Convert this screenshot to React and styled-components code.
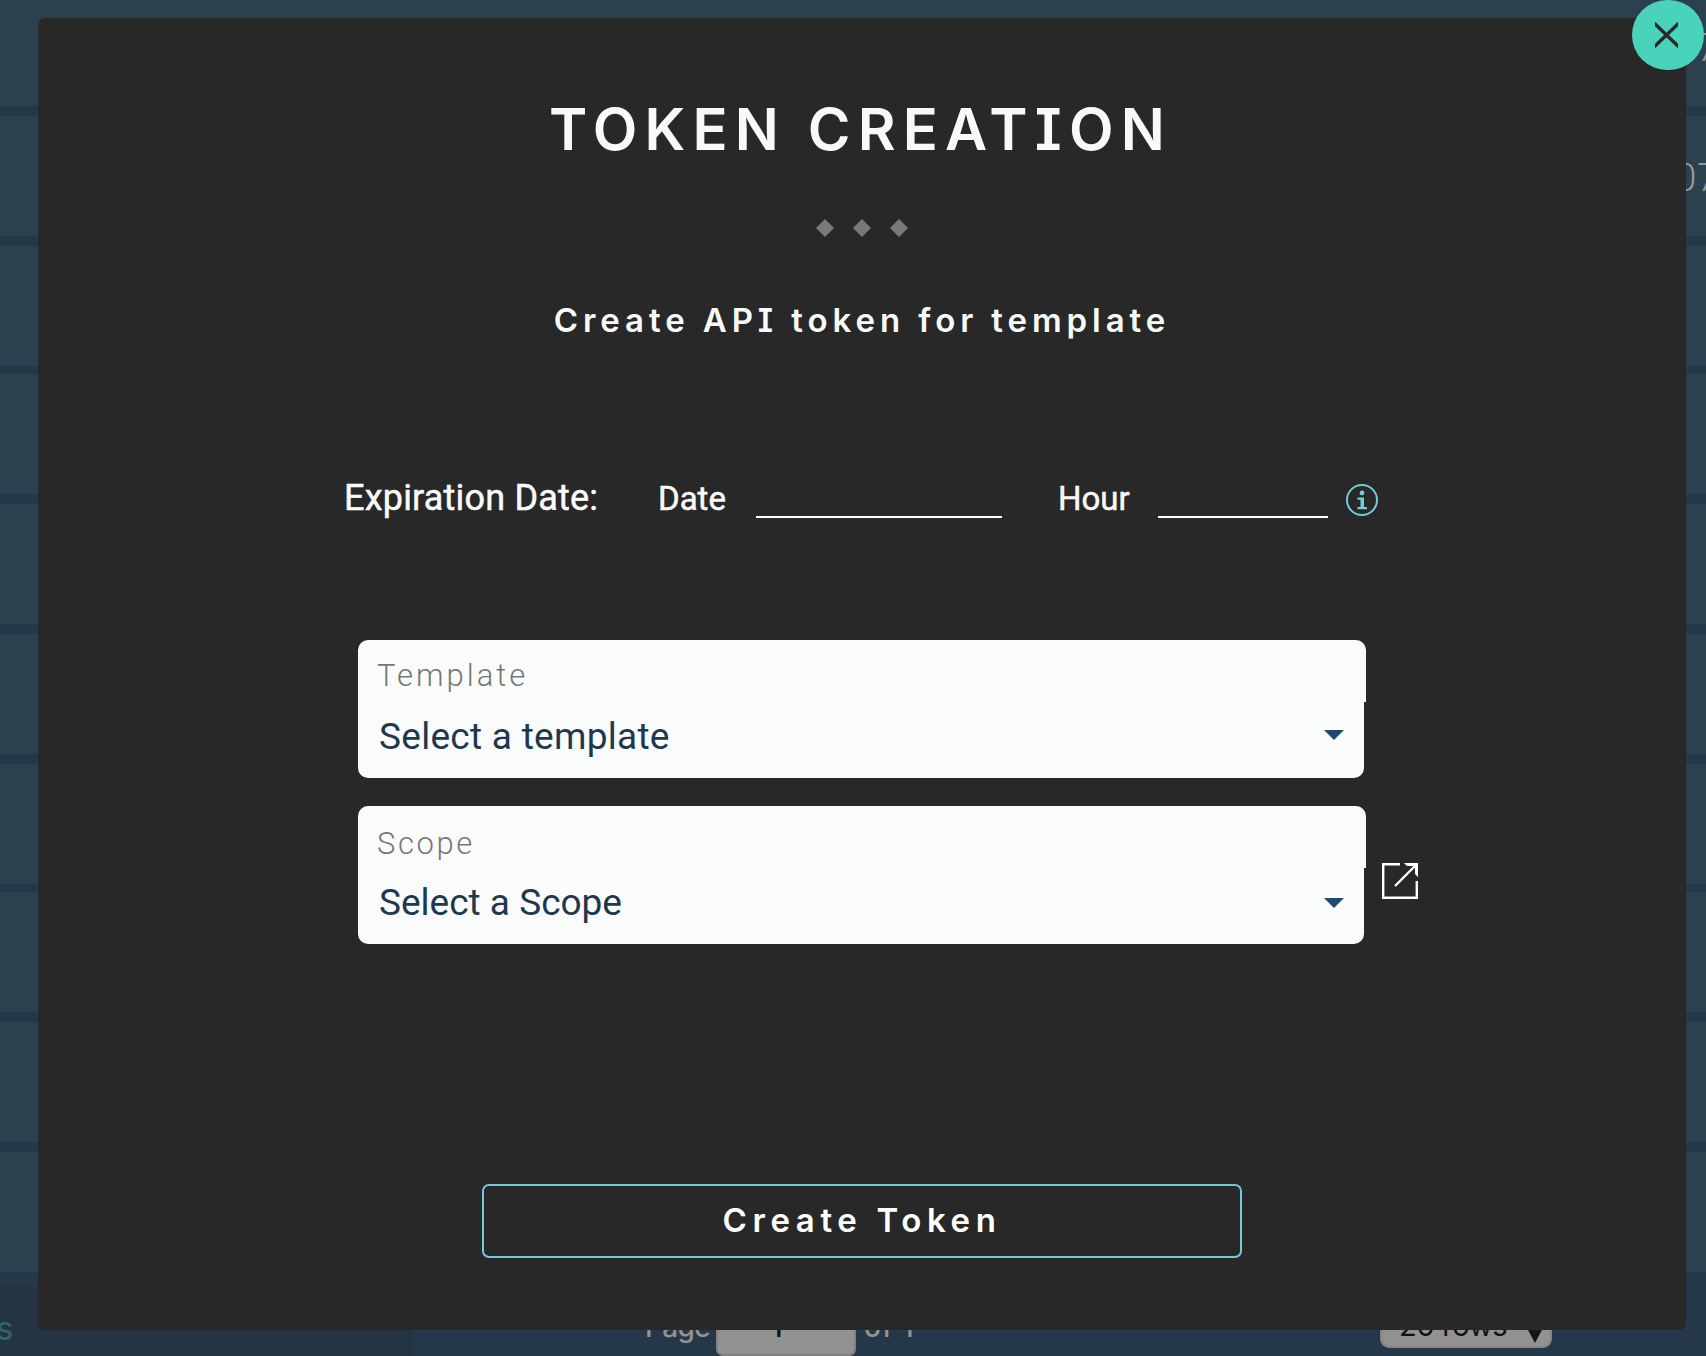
import React from "react";
import styled, { createGlobalStyle } from "styled-components";

const Global = createGlobalStyle`
  * { box-sizing: border-box; }
  body { margin: 0; background: #243849; overflow: hidden; font-family: "Inter", "Liberation Sans", sans-serif; font-feature-settings: "cv08" 1; }
  button { font: inherit; font-feature-settings: inherit; padding: 0; cursor: pointer; }
`;
const Stage = styled.div`
  position: relative; width: 1706px; height: 1356px; overflow: hidden; background: #243849;
`;
const Table = styled.div`display: flex; flex-direction: column; margin-top: -14px;`;
const TableRow = styled.div`
  height: 120px; margin-bottom: ${(p) => p.$gap || 10}px; padding-top: 4px; flex: none;
  background: #2d404e; color: #989898; display: flex; align-items: center;
  font: 300 38px/38px Roboto, sans-serif; white-space: nowrap;
`;
const Scope = styled.span`margin-left: 723px; width: 859px; flex: none;`;
const Time = styled.span`flex: none; padding-left: 10px; letter-spacing: 0.8px;`;
const Pager = styled.footer`
  display: flex; height: 70px; color: #929292; font: 500 28px/36px "Inter", sans-serif; white-space: nowrap;
`;
const PagerLeft = styled.div`
  width: 412px; flex: none; background: #243442; color: #2f6766; padding-top: 24px; font-size: 33px; font-weight: 400; text-indent: -4px;
`;
const PagerMain = styled.div`display: flex; align-items: flex-start; padding: 12px 0 0 233px;`;
const PageWord = styled.span`width: ${(p) => p.$w}px; padding-top: 11px; letter-spacing: ${(p) => p.$ls}px; flex: none;`;
const PageInput = styled.span`
  width: 140px; height: 58px; margin-right: 8px; padding: 9px 0 0 53px; flex: none; border: 2px solid #828282;
  border-radius: 7px; background: #929292; color: #111; line-height: 36px;
`;
const RowsSelect = styled.span`
  display: flex; width: 172px; height: 44px; margin: 6px 0 0 466px; padding: 5px 8px 0 17px; justify-content: space-between;
  border: 2px solid #848484; border-radius: 9px; background: #929292; color: #111; font: 400 29px/30px "Inter", sans-serif;
  letter-spacing: -0.3px;
  svg { margin-top: 4px; }
`;
const Modal = styled.section`
  position: absolute; left: 38px; top: 18px; width: 1648px; height: 1312px; border-radius: 7px;
  background: rgba(40, 40, 40, 0.995); color: #f8fafa;
  display: flex; flex-direction: column; align-items: center;
`;
const Close = styled.button`
  position: absolute; left: 1632px; top: 0; width: 72px; height: 70px; border: 0; border-radius: 36px;
  background: #49d3ba; display: flex; align-items: flex-start; padding: 22px 0 0 23px;
`;
const Title = styled.h1`
  margin: 86px 0 0; font-size: 58px; line-height: 50px; font-weight: 600; letter-spacing: 7.2px; padding-right: 3px; white-space: nowrap;
`;
const Diamonds = styled.div`display: flex; gap: 19px; margin-top: 65px; height: 18px;`;
const Subtitle = styled.h2`
  margin: 63px 0 0; font-size: 33px; line-height: 40px; font-weight: 600; letter-spacing: 4.9px; white-space: nowrap;
`;
const Expiry = styled.div`
  display: flex; align-items: flex-start; width: 1040px; height: 60px; margin: 128px 0 0 4px;
  font: 500 34px/44px Roboto, sans-serif; white-space: nowrap;
`;
const ExpiryLabel = styled.span`
  width: ${(p) => p.$w}px; padding-top: ${(p) => p.$pt}px; font-size: ${(p) => p.$size}px; letter-spacing: ${(p) => p.$ls}px; flex: none; font-weight: 400;
  -webkit-text-stroke: 0.5px currentColor;
`;
const LineInput = styled.span`
  width: ${(p) => p.$w}px; height: 50px; margin-right: ${(p) => p.$mr}px; border-bottom: 2px solid #fff; flex: none;
`;
const InfoMark = styled.span`margin-top: 16px; height: 32px; svg { display: block; }`;
const Fields = styled.div`display: flex; flex-direction: column; gap: 28px; width: 1098px; margin: 112px 0 0 90px;`;
const FieldRow = styled.div`display: flex; align-items: flex-start; height: 138px;`;
const Field = styled.div`width: 1008px; flex: none;`;
const FieldHead = styled.div`
  height: 62px; padding: ${(p) => p.$pt}px 0 0 19px; border-radius: 10px 10px 0 0; background: #fafcfb; color: #777;
  font: 300 31px/40px Roboto, sans-serif; letter-spacing: ${(p) => p.$ls}px;
`;
const FieldValue = styled.div`
  display: flex; justify-content: space-between; width: 1006px; height: 76px; padding: 13px 20px 0 21px;
  border-radius: 0 0 10px 10px; background: #fafcfb; color: #1f384f;
  font: 400 37px/44px Roboto, sans-serif; letter-spacing: ${(p) => p.$ls}px;
`;
const Caret = styled.i`
  width: 0; height: 0; margin-top: ${(p) => p.$mt}px; border: 10px solid transparent; border-top-color: #1f4b6e; border-bottom: 0;
`;
const OpenLink = styled.span`margin: 57px 0 0 16px; svg { display: block; }`;
const Create = styled.button`
  width: 760px; height: 74px; margin: 240px 0 0; padding-bottom: 3px; border: 2px solid #72cadb; border-radius: 7px;
  background: transparent; color: #fff; font-size: 33px; font-weight: 600; letter-spacing: 5.6px;
`;

const rows = [
  { time: true }, { time: true }, { gap: 8 }, {}, {}, {}, { gap: 8 }, {}, {}, { gap: 14 },
];

function SelectField({ label, value, headPad, headSpacing, caretTop, spacing, children }) {
  return (
    <FieldRow>
      <Field>
        <FieldHead $pt={headPad} $ls={headSpacing}>{label}</FieldHead>
        <FieldValue $ls={spacing}>{value}<Caret $mt={caretTop} /></FieldValue>
      </Field>
      {children}
    </FieldRow>
  );
}

export default function App() {
  return (
    <Stage>
      <Global />
      <Table>
        {rows.map((r, i) => (
          <TableRow key={i} $gap={r.gap}>
            {r.time && <><Scope>core</Scope><Time>3:37:07</Time></>}
          </TableRow>
        ))}
      </Table>
      <Pager>
        <PagerLeft>s</PagerLeft>
        <PagerMain>
          <PageWord $w={71} $ls={-0.6}>Page</PageWord>
          <PageInput>1</PageInput>
          <PageWord $w={50} $ls={1}>of 1</PageWord>
          <RowsSelect>
            <span>20 rows</span>
            <svg width="14" height="32" viewBox="0 0 14 32"><path d="M7 0l7 11H0zM7 28l7-13H0z" fill="#151515" /></svg>
          </RowsSelect>
        </PagerMain>
      </Pager>
      <Modal>
        <Title>TOKEN CREATION</Title>
        <Diamonds>
          {[0, 1, 2].map((i) => (
            <svg key={i} width="18" height="18" viewBox="0 0 18 18"><path d="M9 0l9 9-9 9-9-9z" fill="#79797a" /></svg>
          ))}
        </Diamonds>
        <Subtitle>Create API token for template</Subtitle>
        <Expiry>
          <ExpiryLabel $w={314} $pt={8} $size={36} $ls={0.2}>Expiration Date:</ExpiryLabel>
          <ExpiryLabel $w={98} $pt={9} $size={33} $ls={0}>Date</ExpiryLabel>
          <LineInput $w={246} $mr={56} />
          <ExpiryLabel $w={100} $pt={9} $size={33} $ls={0}>Hour</ExpiryLabel>
          <LineInput $w={170} $mr={18} />
          <InfoMark>
            <svg width="32" height="32" viewBox="0 0 32 32" fill="#72cadb">
              <circle cx="16" cy="16" r="15" fill="none" stroke="#72cadb" strokeWidth="2" />
              <circle cx="16" cy="9" r="2.4" />
              <path d="M11.500 13.500h6.500v9.500h3v2.200h-9.500v-2.200h3v-7.300h-3z" />
            </svg>
          </InfoMark>
        </Expiry>
        <Fields>
          <SelectField label="Template" value="Select a template" headPad={16} headSpacing={3} caretTop={15} spacing={0.28} />
          <SelectField label="Scope" value="Select a Scope" headPad={18} headSpacing={2.6} caretTop={17} spacing={0}>
            <OpenLink>
              <svg width="36" height="36" viewBox="0 0 36 36" fill="none" stroke="#fff" strokeWidth="2.4">
                <path d="M18 1.200H1.200v33.600h33.600V18M13 23L33 3" />
                <path d="M22 0h14v14l-3-3V3h-8z" fill="#fff" stroke="none" />
              </svg>
            </OpenLink>
          </SelectField>
        </Fields>
        <Create>Create Token</Create>
      </Modal>
      <Close aria-label="Close">
        <svg width="23" height="26" viewBox="0 0 23 26"><path d="M-1.500 0.500L24.500 25.500M24.500 0.500L-1.500 25.500" fill="none" stroke="#282828" strokeWidth="3.5" /></svg>
      </Close>
    </Stage>
  );
}
